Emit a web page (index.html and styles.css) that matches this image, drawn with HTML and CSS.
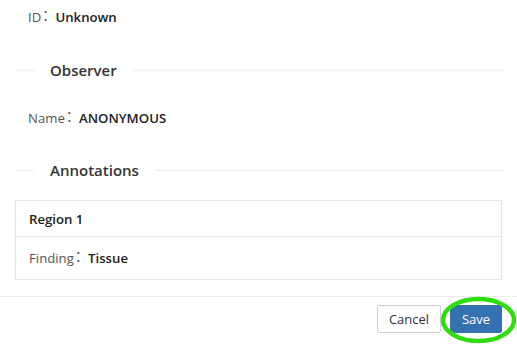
FILE: index.html
```html
<!DOCTYPE html>
<html>
<head>
<meta charset="utf-8">
<link rel="stylesheet" href="styles.css">
</head>
<body>
<div class="content">
  <div class="field"><span class="label">ID<span class="colon">：</span></span><span class="value">Unknown</span></div>
  <div class="divider"><span class="line left"></span><span class="title">Observer</span><span class="line right"></span></div>
  <div class="field"><span class="label">Name<span class="colon">：</span></span><span class="value">ANONYMOUS</span></div>
  <div class="divider second"><span class="line left"></span><span class="title">Annotations</span><span class="line right"></span></div>
  <div class="card">
    <div class="card-head">Region 1</div>
    <div class="card-body"><span class="label">Finding<span class="colon">：</span></span><span class="value">Tissue</span></div>
  </div>
</div>
<div class="footer">
  <button class="btn cancel">Cancel</button>
  <button class="btn save">Save</button>
  <svg class="mark" width="80" height="50" viewBox="0 0 80 50"><ellipse cx="38.5" cy="24" rx="35.5" ry="21" fill="none" stroke="#2fdc0c" stroke-width="4.5"/></svg>
</div>
</body>
</html>
```
FILE: styles.css
```css
html, body { margin: 0; padding: 0; background: #fff; }
body { font-family: "Open Sans", "Noto Sans CJK SC", sans-serif; font-size: 13.2px; color: #333; width: 517px; height: 345px; overflow: hidden; position: relative; }
.content { padding: 0 15px 0 15px; }
.field { height: 34px; line-height: 34px; padding-left: 13px; white-space: nowrap; }
.label { color: #555; }
.colon { font-family: "Noto Sans CJK SC", sans-serif; vertical-align: 2.5px; line-height: 1; margin-left: 1px; }
.value { color: #222; font-weight: 600; }
.divider { height: 24px; margin: 24px 0 19px; display: flex; align-items: center; }
.divider.second { margin: 23px 0 18px; }
.line { height: 1px; background: #ececec; }
.line.left { width: 19px; }
.line.right { flex: 1; margin-right: -1px; }
.title { padding: 0 16px; font-size: 15px; font-weight: 600; color: #333; }
.card { border: 1px solid #e6e6e6; height: 78px; }
.card-head { height: 35px; border-bottom: 1px solid #e6e6e6; display: flex; align-items: center; padding-left: 13px; font-weight: 600; color: #222; }
.card-body { height: 42px; line-height: 42px; padding-left: 13px; white-space: nowrap; }
.footer { margin-top: 16px; border-top: 1px solid #ebebeb; display: flex; justify-content: flex-end; gap: 9px; padding: 8px 15px 0 0; position: relative; }
.btn { font-family: inherit; font-size: 13px; height: 28px; border-radius: 2px; padding: 0; cursor: pointer; }
.cancel { width: 64px; background: #fff; border: 1px solid #cfcfcf; color: #333; }
.save { width: 52px; background: #3571b1; border: 1px solid #3571b1; color: #fff; }
.mark { position: absolute; left: 440px; top: -1px; }
```
